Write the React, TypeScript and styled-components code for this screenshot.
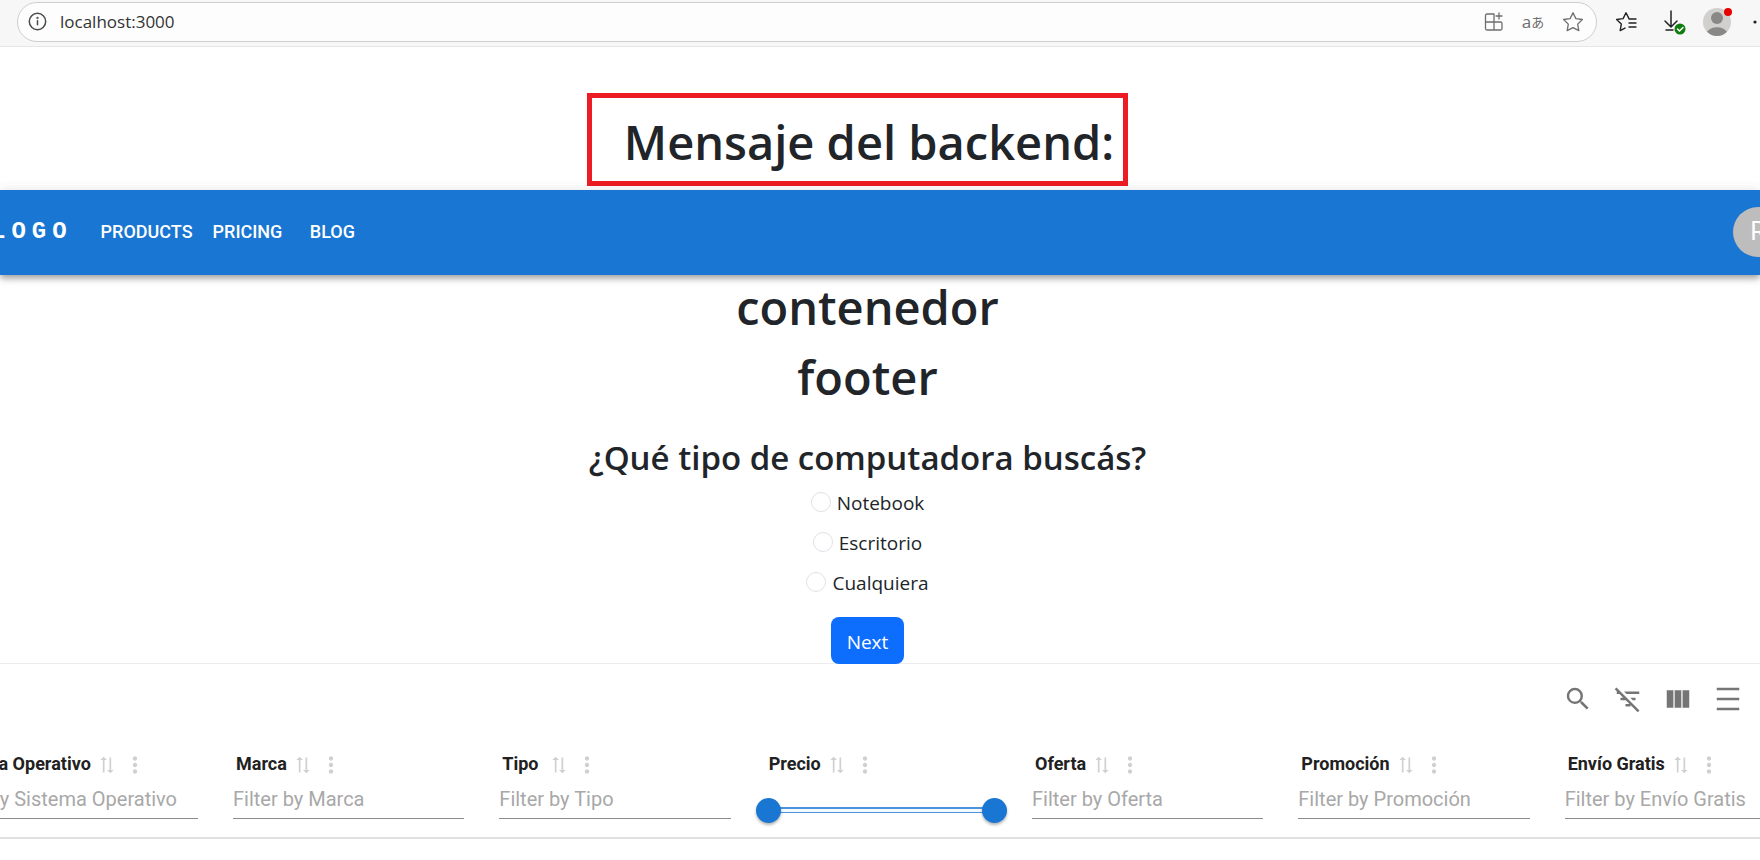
import React from 'react';
import styled, { createGlobalStyle } from 'styled-components';
import { MdSearch, MdFilterListOff, MdViewColumn, MdDensityMedium, MdMoreVert, MdSyncAlt } from 'react-icons/md';

const ui = '"Segoe UI", "Open Sans", "Noto Sans", sans-serif';
const roboto = 'Roboto, "Liberation Sans", sans-serif';

const GlobalStyle = createGlobalStyle`
  *, *::before, *::after { box-sizing: border-box; }
  body {
    margin: 0;
    background: #fff;
    color: #212529;
    font-family: ${ui};
    overflow-x: hidden;
  }
`;

const Page = styled.div`
  min-height: 100vh;
  overflow: hidden;
`;

const BrowserBar = styled.div`
  display: flex;
  align-items: center;
  height: 47px;
  padding: 2px 0 5px 17px;
  background: #f7f7f7;
  border-bottom: 1px solid #e5e5e5;
`;

const AddressBar = styled.div`
  display: flex;
  flex: 1;
  align-items: center;
  gap: 13px;
  height: 40px;
  padding: 0 12px 0 10px;
  background: #fdfdfd;
  border: 1px solid #cecece;
  border-radius: 20px;
`;

const AddressInput = styled.input`
  flex: 1;
  min-width: 0;
  padding: 0;
  border: 0;
  outline: 0;
  background: transparent;
  color: #333;
  font: 400 17px/24px ${ui};
`;

const BarActions = styled.div`
  display: flex;
  align-items: center;
  gap: 18px;
`;

const BrowserActions = styled(BarActions)`
  gap: 17px;
  padding-left: 18px;
  margin-right: -20px;
`;

const BarButton = styled.button`
  display: flex;
  padding: 0;
  border: 0;
  background: none;
  color: #6e6e6e;
`;

const DarkBarButton = styled(BarButton)`
  color: #222;
`;

const TranslateGlyph = styled.span`
  display: flex;
  align-items: center;
  justify-content: center;
  width: 22px;
  font: 400 17px/22px ${ui}, "Noto Sans CJK JP", sans-serif;
  white-space: nowrap;
`;

const Kana = styled.span`
  font-size: 13px;
`;

const MessageArea = styled.header`
  display: flex;
  justify-content: center;
  padding: 46px 45px 4px 0;
`;

const MessageBox = styled.div`
  padding: 14px 9px 9px 32px;
  border: 5px solid #ed1c24;
`;

const Title = styled.h1`
  margin: 0;
  font-size: 47px;
  font-weight: 600;
  line-height: 60px;
  white-space: nowrap;
`;

const NavBar = styled.nav`
  position: relative;
  display: flex;
  align-items: center;
  height: 85px;
  padding-bottom: 2px;
  background: #1976d2;
  color: #fff;
  font-family: ${roboto};
  box-shadow: 0 3px 5px -1px rgba(0, 0, 0, 0.2), 0 5px 6px 0 rgba(0, 0, 0, 0.14), 0 1px 12px 0 rgba(0, 0, 0, 0.12);
`;

const Logo = styled.a`
  margin: 0 18px 0 -9px;
  color: inherit;
  font: 700 24px/40px "Liberation Mono", monospace;
  letter-spacing: 6px;
  text-decoration: none;
`;

const NavButton = styled.button`
  min-width: 80px;
  padding: 0 10px;
  border: 0;
  background: none;
  color: inherit;
  font: 500 18px/32px ${roboto};
`;

const Avatar = styled.button`
  width: 50px;
  height: 50px;
  margin: 0 -23px 0 auto;
  padding: 0;
  border: 0;
  border-radius: 50%;
  background: #bdbdbd;
  color: #fff;
  font: 400 25px/50px ${roboto};
`;

const Main = styled.main`
  display: flex;
  flex-direction: column;
  align-items: center;
  padding: 2px 25px 0 0;
`;

const Section = styled(Title).attrs({ as: 'h2' })`
  margin-bottom: 10px;
`;

const Form = styled.form`
  display: flex;
  flex-direction: column;
  align-items: center;
  padding-top: 20px;
`;

const Question = styled.h3`
  margin: 0 0 9px;
  font-size: 33px;
  font-weight: 600;
  line-height: 42px;
  white-space: nowrap;
`;

const Option = styled.label`
  display: flex;
  align-items: center;
  gap: 6px;
  height: 30px;
  margin-bottom: 10px;
  font-size: 19px;
`;

const Radio = styled.input`
  appearance: none;
  width: 20px;
  height: 20px;
  margin: 0 0 2px;
  border: 1px solid #dee2e6;
  border-radius: 50%;
  background: #fff;
  &:checked { border: 6px solid #0d6efd; }
`;

const NextButton = styled.button`
  height: 47px;
  margin-top: 9px;
  padding: 2px 16px 0;
  border: 0;
  border-radius: 8px;
  background: #0d6efd;
  color: #fff;
  font: 500 19px/30px ${ui};
`;

const Paper = styled.section`
  margin-top: -1px;
  border-top: 1px solid #ececec;
  font-family: ${roboto};
`;

const Toolbar = styled.div`
  display: flex;
  justify-content: flex-end;
  gap: 20px;
  padding: 20px 17px 34px;
`;

const ToolButton = styled.button`
  display: flex;
  padding: 0;
  border: 0;
  background: none;
  color: #757575;
`;

const Table = styled.table`
  width: calc(100% + 132px);
  margin-left: -78px;
  table-layout: fixed;
  border-collapse: collapse;
  border-bottom: 2px solid #e0e0e0;
`;

const HeadCell = styled.th`
  height: 90px;
  padding: 0 18px 0 17px;
  text-align: left;
  vertical-align: top;
  font-weight: 400;
  &:first-child { width: 294px; }
`;

const HeadLabel = styled.div<{ $gap: number }>`
  display: flex;
  align-items: center;
  height: 30px;
  padding-left: 3px;
  color: #212121;
  font-size: 18px;
  font-weight: 700;
  white-space: nowrap;
  > button:first-of-type { margin-left: ${p => p.$gap}px; }
`;

const IconButton = styled.button`
  display: flex;
  padding: 4px 0 0;
  border: 0;
  background: none;
  color: #d0d0d0;
`;

const SortButton = styled(IconButton)`
  svg { transform: rotate(-90deg); }
`;

const MenuButton = styled(IconButton)`
  margin-left: 5px;
`;

const FilterInput = styled.input`
  display: block;
  width: 100%;
  height: 41px;
  padding: 2px 0 0;
  border: 0;
  border-bottom: 1px solid #8c8c8c;
  border-radius: 0;
  outline: 0;
  background: transparent;
  color: #212121;
  font: 400 20px/30px ${roboto};
  &::placeholder { color: #a8a8a8; opacity: 1; }
`;

const RangeBox = styled.div`
  position: relative;
  height: 26px;
  margin: 19px -10px 0;
  &::before {
    content: '';
    position: absolute;
    top: 10px;
    right: 12px;
    left: 12px;
    height: 6px;
    border: 1px solid #4b94dd;
    border-width: 2px 0 1px;
    background: #f4f9fd;
  }
`;

const RangeThumb = styled.input`
  position: absolute;
  inset: 0;
  width: 100%;
  height: 26px;
  margin: 0;
  appearance: none;
  background: transparent;
  pointer-events: none;
  &::-webkit-slider-thumb {
    appearance: none;
    width: 25px;
    height: 25px;
    border-radius: 50%;
    background: #1976d2;
    box-shadow: 0 2px 3px rgba(0, 0, 0, 0.3);
    pointer-events: auto;
  }
`;

const line = { fill: 'none', stroke: 'currentColor', strokeLinecap: 'round', strokeLinejoin: 'round' } as const;

const columns = [
  { name: 'Sistema Operativo', gap: 6 },
  { name: 'Marca', gap: 6 },
  { name: 'Tipo', gap: 10 },
  { name: 'Precio', gap: 6, range: true },
  { name: 'Oferta', gap: 6 },
  { name: 'Promoción', gap: 6 },
  { name: 'Envío Gratis', gap: 6 },
];

const tools = [
  { label: 'Search', Icon: MdSearch },
  { label: 'Filters', Icon: MdFilterListOff },
  { label: 'Columns', Icon: MdViewColumn },
  { label: 'Density', Icon: MdDensityMedium },
];

function Browser() {
  return (
    <BrowserBar>
      <AddressBar>
        <BarButton aria-label="Site information">
          <svg width="19" height="19" viewBox="0 0 19 19" {...line} stroke="#4a4a4a" strokeWidth="1.5">
            <circle cx="9.5" cy="9.5" r="8.2" />
            <path d="M9.5 8.8v4" />
            <circle cx="9.5" cy="6" r=".4" />
          </svg>
        </BarButton>
        <AddressInput aria-label="Address" defaultValue="localhost:3000" />
        <BarActions>
          <BarButton aria-label="Add app">
            <svg width="20" height="20" viewBox="0 0 20 20" {...line} strokeWidth="1.3">
              <path d="M10 2H3A1.5 1.5 0 0 0 1.5 3.500v13A1.5 1.5 0 0 0 3 18h13.500a1.5 1.5 0 0 0 1.5-1.5v-5A1.5 1.5 0 0 0 16.500 10H1.5M10 2v16M15 1v6M12 4h6" />
            </svg>
          </BarButton>
          <BarButton aria-label="Translate">
            <TranslateGlyph>a<Kana>あ</Kana></TranslateGlyph>
          </BarButton>
          <BarButton aria-label="Add favorite">
            <svg width="22" height="22" viewBox="0 0 22 22" {...line} strokeWidth="1.3">
              <path d="M11 1.700l2.900 5.900 6.500.9-4.700 4.600 1.100 6.500-5.800-3-5.800 3 1.100-6.500L1.600 8.500l6.500-.9z" />
            </svg>
          </BarButton>
        </BarActions>
      </AddressBar>
      <BrowserActions>
        <DarkBarButton aria-label="Favorites">
          <svg width="31" height="22" viewBox="0 0 31 22" {...line} strokeWidth="1.4">
            <path d="M14 7.600L11 1.700 8.100 7.600l-6.500.9 4.700 4.600-1.100 6.500 4.800-2.500M14 8h7M14 12h7M14 16h7" />
          </svg>
        </DarkBarButton>
        <DarkBarButton aria-label="Downloads">
          <svg width="23" height="26" viewBox="0 0 23 26" {...line} strokeWidth="1.5">
            <path d="M8 2v15M2 12l6 6 6-6M3 21h7" />
            <circle cx="17" cy="20" r="5.500" fill="#107c10" stroke="none" />
            <path d="M14.500 20l2 2 3.500-3.500" stroke="#fff" />
          </svg>
        </DarkBarButton>
        <DarkBarButton aria-label="Profile">
          <svg width="28" height="30" viewBox="1 0 28 30" overflow="visible">
            <circle cx="15" cy="15" r="14" fill="#d2d0ce" />
            <circle cx="15" cy="11" r="6" fill="#8a8886" />
            <path d="M5 24.800a11 8 0 0 1 20 0A14 14 0 0 1 5 24.800z" fill="#8a8886" />
            <circle cx="26" cy="5" r="4" fill="#e60000" />
          </svg>
        </DarkBarButton>
        <DarkBarButton aria-label="More">
          <svg width="32" height="22" viewBox="0 0 32 22" fill="currentColor">
            <circle cx="7" cy="11" r="1.600" /><circle cx="14" cy="11" r="1.600" /><circle cx="21" cy="11" r="1.600" />
          </svg>
        </DarkBarButton>
      </BrowserActions>
    </BrowserBar>
  );
}

export default function App() {
  return (
    <Page>
      <GlobalStyle />
      <Browser />
      <MessageArea>
        <MessageBox><Title>Mensaje del backend:</Title></MessageBox>
      </MessageArea>
      <NavBar>
        <Logo href="#">LOGO</Logo>
        <NavButton>PRODUCTS</NavButton>
        <NavButton>PRICING</NavButton>
        <NavButton>BLOG</NavButton>
        <Avatar aria-label="Account">R</Avatar>
      </NavBar>
      <Main>
        <Section>contenedor</Section>
        <Section>footer</Section>
        <Form onSubmit={e => e.preventDefault()}>
          <Question>¿Qué tipo de computadora buscás?</Question>
          {['Notebook', 'Escritorio', 'Cualquiera'].map(name => (
            <Option key={name}><Radio type="radio" name="tipo" value={name} />{name}</Option>
          ))}
          <NextButton type="submit">Next</NextButton>
        </Form>
      </Main>
      <Paper>
        <Toolbar>
          {tools.map(({ label, Icon }) => (
            <ToolButton key={label} aria-label={label}><Icon size={30} /></ToolButton>
          ))}
        </Toolbar>
        <Table>
          <thead>
            <tr>
              {columns.map(({ name, gap, range }) => (
                <HeadCell key={name} scope="col">
                  <HeadLabel $gap={gap}>
                    {name}
                    <SortButton aria-label={`Sort by ${name}`}><MdSyncAlt size={20} /></SortButton>
                    <MenuButton aria-label={`${name} actions`}><MdMoreVert size={26} /></MenuButton>
                  </HeadLabel>
                  {range ? (
                    <RangeBox>
                      <RangeThumb type="range" aria-label={`${name} min`} min={0} max={100} defaultValue={0} />
                      <RangeThumb type="range" aria-label={`${name} max`} min={0} max={100} defaultValue={100} />
                    </RangeBox>
                  ) : (
                    <FilterInput aria-label={`Filter by ${name}`} placeholder={`Filter by ${name}`} />
                  )}
                </HeadCell>
              ))}
            </tr>
          </thead>
        </Table>
      </Paper>
    </Page>
  );
}
